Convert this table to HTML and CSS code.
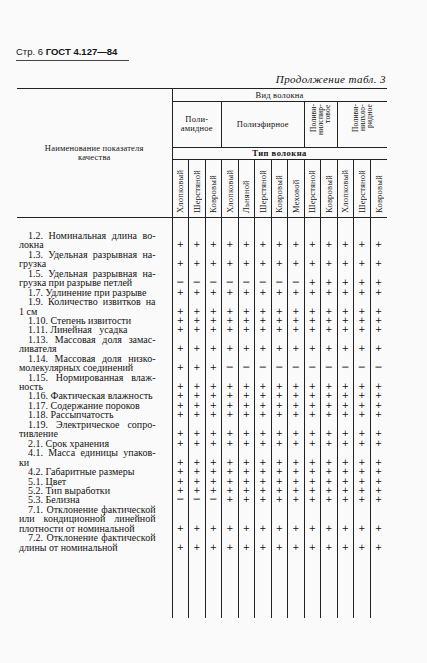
FILE: index.html
```html
<!DOCTYPE html>
<html lang="ru">
<head>
<meta charset="utf-8">
<title>ГОСТ 4.127—84</title>
<link rel="stylesheet" href="styles.css">
</head>
<body>
<div class="page">
  <div class="page-head"><span class="pg">Стр. 6</span> <span class="std">ГОСТ 4.127—84</span></div>
  <div class="caption">Продолжение табл. 3</div>
  <table class="spec">
    <colgroup>
      <col class="c-name">
      <col class="c-d"><col class="c-d"><col class="c-d"><col class="c-d"><col class="c-d"><col class="c-d"><col class="c-d"><col class="c-d"><col class="c-d"><col class="c-d"><col class="c-d"><col class="c-d"><col class="c-d">
    </colgroup>
    <thead>
      <tr class="h-a">
        <th class="name-h" rowspan="4">Наименование показателя<br>качества</th>
        <th class="kind" colspan="13">Вид волокна</th>
      </tr>
      <tr class="h-b">
        <th class="grp" colspan="3">Поли-<br>амидное</th>
        <th class="grp" colspan="5">Полиэфирное</th>
        <th class="grp" colspan="2"><div class="vt3">Поливи-<br>нилспир-<br>товое</div></th>
        <th class="grp" colspan="3"><div class="vt3">Поливи-<br>нилхло-<br>ридное</div></th>
      </tr>
      <tr class="h-c">
        <th class="type" colspan="13">Тип волокна</th>
      </tr>
      <tr class="h-d">
        <th class="vt"><div>Хлопковый</div></th>
        <th class="vt"><div>Шерстяной</div></th>
        <th class="vt"><div>Ковровый</div></th>
        <th class="vt"><div>Хлопковый</div></th>
        <th class="vt"><div>Льняной</div></th>
        <th class="vt"><div>Шерстяной</div></th>
        <th class="vt"><div>Ковровый</div></th>
        <th class="vt"><div>Меховой</div></th>
        <th class="vt"><div>Шерстяной</div></th>
        <th class="vt"><div>Ковровый</div></th>
        <th class="vt"><div>Хлопковый</div></th>
        <th class="vt"><div>Шерстяной</div></th>
        <th class="vt"><div>Ковровый</div></th>
      </tr>
    </thead>
    <tbody>
      <tr class="gap"><td class="name"></td><td class="m"></td><td class="m"></td><td class="m"></td><td class="m"></td><td class="m"></td><td class="m"></td><td class="m"></td><td class="m"></td><td class="m"></td><td class="m"></td><td class="m"></td><td class="m"></td><td class="m"></td></tr>
      <tr>
        <td class="name"><span class="l f j">1.2. Номинальная длина во-</span><span class="l">локна</span></td>
        <td class="m">+</td><td class="m">+</td><td class="m">+</td><td class="m">+</td><td class="m">+</td><td class="m">+</td><td class="m">+</td><td class="m">+</td><td class="m">+</td><td class="m">+</td><td class="m">+</td><td class="m">+</td><td class="m">+</td>
      </tr>
      <tr>
        <td class="name"><span class="l f j">1.3. Удельная разрывная на-</span><span class="l">грузка</span></td>
        <td class="m">+</td><td class="m">+</td><td class="m">+</td><td class="m">+</td><td class="m">+</td><td class="m">+</td><td class="m">+</td><td class="m">+</td><td class="m">+</td><td class="m">+</td><td class="m">+</td><td class="m">+</td><td class="m">+</td>
      </tr>
      <tr>
        <td class="name"><span class="l f j">1.5. Удельная разрывная на-</span><span class="l">грузка при разрыве петлей</span></td>
        <td class="m d">—</td><td class="m d">—</td><td class="m d">—</td><td class="m d">—</td><td class="m d">—</td><td class="m d">—</td><td class="m d">—</td><td class="m d">—</td><td class="m">+</td><td class="m">+</td><td class="m">+</td><td class="m">+</td><td class="m">+</td>
      </tr>
      <tr>
        <td class="name"><span class="l f">1.7. Удлинение при разрыве</span></td>
        <td class="m">+</td><td class="m">+</td><td class="m">+</td><td class="m">+</td><td class="m">+</td><td class="m">+</td><td class="m">+</td><td class="m">+</td><td class="m">+</td><td class="m">+</td><td class="m">+</td><td class="m">+</td><td class="m">+</td>
      </tr>
      <tr>
        <td class="name"><span class="l f j">1.9. Количество извитков на</span><span class="l">1 см</span></td>
        <td class="m">+</td><td class="m">+</td><td class="m">+</td><td class="m">+</td><td class="m">+</td><td class="m">+</td><td class="m">+</td><td class="m">+</td><td class="m">+</td><td class="m">+</td><td class="m">+</td><td class="m">+</td><td class="m">+</td>
      </tr>
      <tr>
        <td class="name"><span class="l f">1.10. Степень извитости</span></td>
        <td class="m">+</td><td class="m">+</td><td class="m">+</td><td class="m">+</td><td class="m">+</td><td class="m">+</td><td class="m">+</td><td class="m">+</td><td class="m">+</td><td class="m">+</td><td class="m">+</td><td class="m">+</td><td class="m">+</td>
      </tr>
      <tr>
        <td class="name"><span class="l f">1.11. Линейная&nbsp;&nbsp; усадка</span></td>
        <td class="m">+</td><td class="m">+</td><td class="m">+</td><td class="m">+</td><td class="m">+</td><td class="m">+</td><td class="m">+</td><td class="m">+</td><td class="m">+</td><td class="m">+</td><td class="m">+</td><td class="m">+</td><td class="m">+</td>
      </tr>
      <tr>
        <td class="name"><span class="l f j">1.13. Массовая доля замас-</span><span class="l">ливателя</span></td>
        <td class="m">+</td><td class="m">+</td><td class="m">+</td><td class="m">+</td><td class="m">+</td><td class="m">+</td><td class="m">+</td><td class="m">+</td><td class="m">+</td><td class="m">+</td><td class="m">+</td><td class="m">+</td><td class="m">+</td>
      </tr>
      <tr>
        <td class="name"><span class="l f j">1.14. Массовая доля низко-</span><span class="l">молекулярных соединений</span></td>
        <td class="m">+</td><td class="m">+</td><td class="m">+</td><td class="m d">—</td><td class="m d">—</td><td class="m d">—</td><td class="m d">—</td><td class="m d">—</td><td class="m d">—</td><td class="m d">—</td><td class="m d">—</td><td class="m d">—</td><td class="m d">—</td>
      </tr>
      <tr>
        <td class="name"><span class="l f j">1.15. Нормированная влаж-</span><span class="l">ность</span></td>
        <td class="m">+</td><td class="m">+</td><td class="m">+</td><td class="m">+</td><td class="m">+</td><td class="m">+</td><td class="m">+</td><td class="m">+</td><td class="m">+</td><td class="m">+</td><td class="m">+</td><td class="m">+</td><td class="m">+</td>
      </tr>
      <tr>
        <td class="name"><span class="l f">1.16. Фактическая влажность</span></td>
        <td class="m">+</td><td class="m">+</td><td class="m">+</td><td class="m">+</td><td class="m">+</td><td class="m">+</td><td class="m">+</td><td class="m">+</td><td class="m">+</td><td class="m">+</td><td class="m">+</td><td class="m">+</td><td class="m">+</td>
      </tr>
      <tr>
        <td class="name"><span class="l f">1.17. Содержание пороков</span></td>
        <td class="m">+</td><td class="m">+</td><td class="m">+</td><td class="m">+</td><td class="m">+</td><td class="m">+</td><td class="m">+</td><td class="m">+</td><td class="m">+</td><td class="m">+</td><td class="m">+</td><td class="m">+</td><td class="m">+</td>
      </tr>
      <tr>
        <td class="name"><span class="l f">1.18. Рассыпчатость</span></td>
        <td class="m">+</td><td class="m">+</td><td class="m">+</td><td class="m">+</td><td class="m">+</td><td class="m">+</td><td class="m">+</td><td class="m">+</td><td class="m">+</td><td class="m">+</td><td class="m">+</td><td class="m">+</td><td class="m">+</td>
      </tr>
      <tr>
        <td class="name"><span class="l f j">1.19. Электрическое сопро-</span><span class="l">тивление</span></td>
        <td class="m">+</td><td class="m">+</td><td class="m">+</td><td class="m">+</td><td class="m">+</td><td class="m">+</td><td class="m">+</td><td class="m">+</td><td class="m">+</td><td class="m">+</td><td class="m">+</td><td class="m">+</td><td class="m">+</td>
      </tr>
      <tr>
        <td class="name"><span class="l f">2.1. Срок хранения</span></td>
        <td class="m">+</td><td class="m">+</td><td class="m">+</td><td class="m">+</td><td class="m">+</td><td class="m">+</td><td class="m">+</td><td class="m">+</td><td class="m">+</td><td class="m">+</td><td class="m">+</td><td class="m">+</td><td class="m">+</td>
      </tr>
      <tr>
        <td class="name"><span class="l f j">4.1. Масса единицы упаков-</span><span class="l">ки</span></td>
        <td class="m">+</td><td class="m">+</td><td class="m">+</td><td class="m">+</td><td class="m">+</td><td class="m">+</td><td class="m">+</td><td class="m">+</td><td class="m">+</td><td class="m">+</td><td class="m">+</td><td class="m">+</td><td class="m">+</td>
      </tr>
      <tr>
        <td class="name"><span class="l f">4.2. Габаритные размеры</span></td>
        <td class="m">+</td><td class="m">+</td><td class="m">+</td><td class="m">+</td><td class="m">+</td><td class="m">+</td><td class="m">+</td><td class="m">+</td><td class="m">+</td><td class="m">+</td><td class="m">+</td><td class="m">+</td><td class="m">+</td>
      </tr>
      <tr>
        <td class="name"><span class="l f">5.1. Цвет</span></td>
        <td class="m">+</td><td class="m">+</td><td class="m">+</td><td class="m">+</td><td class="m">+</td><td class="m">+</td><td class="m">+</td><td class="m">+</td><td class="m">+</td><td class="m">+</td><td class="m">+</td><td class="m">+</td><td class="m">+</td>
      </tr>
      <tr>
        <td class="name"><span class="l f">5.2. Тип выработки</span></td>
        <td class="m">+</td><td class="m">+</td><td class="m">+</td><td class="m">+</td><td class="m">+</td><td class="m">+</td><td class="m">+</td><td class="m">+</td><td class="m">+</td><td class="m">+</td><td class="m">+</td><td class="m">+</td><td class="m">+</td>
      </tr>
      <tr>
        <td class="name"><span class="l f">5.3. Белизна</span></td>
        <td class="m d">—</td><td class="m d">—</td><td class="m d">—</td><td class="m">+</td><td class="m">+</td><td class="m">+</td><td class="m">+</td><td class="m">+</td><td class="m">+</td><td class="m">+</td><td class="m">+</td><td class="m">+</td><td class="m">+</td>
      </tr>
      <tr>
        <td class="name"><span class="l f j">7.1. Отклонение фактической</span><span class="l j">или кондиционной линейной</span><span class="l">плотности от номинальной</span></td>
        <td class="m">+</td><td class="m">+</td><td class="m">+</td><td class="m">+</td><td class="m">+</td><td class="m">+</td><td class="m">+</td><td class="m">+</td><td class="m">+</td><td class="m">+</td><td class="m">+</td><td class="m">+</td><td class="m">+</td>
      </tr>
      <tr>
        <td class="name"><span class="l f j">7.2. Отклонение фактической</span><span class="l">длины от номинальной</span></td>
        <td class="m">+</td><td class="m">+</td><td class="m">+</td><td class="m">+</td><td class="m">+</td><td class="m">+</td><td class="m">+</td><td class="m">+</td><td class="m">+</td><td class="m">+</td><td class="m">+</td><td class="m">+</td><td class="m">+</td>
      </tr>
      <tr class="fill"><td class="name"></td><td class="m"></td><td class="m"></td><td class="m"></td><td class="m"></td><td class="m"></td><td class="m"></td><td class="m"></td><td class="m"></td><td class="m"></td><td class="m"></td><td class="m"></td><td class="m"></td><td class="m"></td></tr>
    </tbody>
  </table>
</div>
</body>
</html>
```

FILE: styles.css
```css
html, body {
  margin: 0;
  padding: 0;
  background: #fafafa;
}

body {
  font-family: "Liberation Serif", "DejaVu Serif", serif;
  color: #141414;
}

.page {
  width: 427px;
  height: 663px;
  overflow: hidden;
}

.page-head {
  margin: 46px 0 0 16px;
  width: 113px;
  height: 12px;
  line-height: 12px;
  padding-bottom: 2px;
  border-bottom: 1.5px solid #444;
  font-family: "Liberation Sans", Arial, sans-serif;
  font-size: 9.5px;
  white-space: nowrap;
}

.page-head .pg {
  font-weight: normal;
}

.page-head .std {
  font-weight: bold;
}

.caption {
  margin: 11.5px 0 0 17px;
  width: 369px;
  height: 12px;
  line-height: 12px;
  text-align: right;
  font-style: italic;
  font-size: 11px;
  letter-spacing: 0.4px;
}

.spec {
  margin: 3px 0 0 17px;
  width: 369.5px;
  border-collapse: collapse;
  table-layout: fixed;
  border-top: 1.5px solid #222;
}

.c-name {
  width: 155px;
}

.c-d {
  width: 16.5px;
}

.spec th {
  font-weight: normal;
  padding: 0;
  font-size: 8.5px;
  letter-spacing: 0.2px;
}

.name-h {
  border-right: 1px solid #222;
  border-bottom: 1px solid #222;
  line-height: 9px;
  vertical-align: middle;
  text-align: center;
}

.h-a {
  height: 13px;
}

.kind {
  border-bottom: 1px solid #222;
  line-height: 10px;
  vertical-align: middle;
}

.h-b {
  height: 46px;
}

.grp {
  border-left: 1px solid #222;
  border-bottom: 1px solid #222;
  line-height: 9px;
  vertical-align: middle;
}

.vt3 {
  writing-mode: vertical-rl;
  transform: rotate(180deg);
  height: 40px;
  margin: 0 auto;
  font-size: 7.5px;
  line-height: 7px;
  text-align: end;
}

.h-c {
  height: 12px;
}

.type {
  border-bottom: 1px solid #222;
  line-height: 10px;
  font-weight: bold !important;
  letter-spacing: 0.5px !important;
  vertical-align: middle;
}

.h-d {
  height: 58px;
}

.vt {
  border-left: 1px solid #222;
  border-bottom: 1px solid #222;
  vertical-align: bottom;
  padding-bottom: 4px !important;
}

.vt div {
  writing-mode: vertical-rl;
  transform: rotate(180deg);
  height: 50px;
  margin: 0 auto;
  line-height: 10px;
  text-align: start;
  font-size: 8.5px;
}

.spec td {
  padding: 0;
}

.name {
  padding: 0 16px 0 2px !important;
  vertical-align: top;
  font-size: 10px;
  line-height: 9.45px;
}

.l {
  display: block;
  height: 9.45px;
  white-space: nowrap;
}

.f {
  padding-left: 9px;
}

.j {
  text-align: justify;
  text-align-last: justify;
  white-space: normal;
}

.m {
  border-left: 1px solid #222;
  text-align: center;
  vertical-align: bottom;
  font-family: "DejaVu Sans", sans-serif;
  font-size: 8.5px;
  line-height: 9.45px;
  color: #0e0e0e;
}

.m.d {
  font-size: 7px;
  font-weight: bold;
}

.gap {
  height: 14px;
}

.fill {
  height: 66px;
}
```
